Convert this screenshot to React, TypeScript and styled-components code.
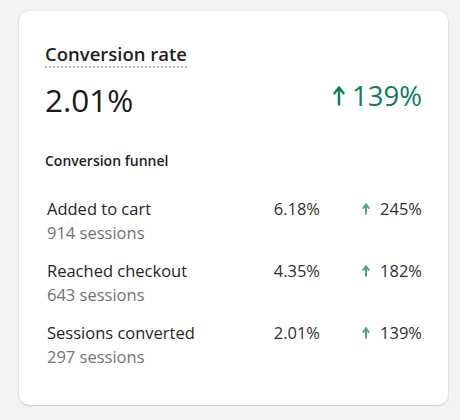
import React from 'react';
import styled, { createGlobalStyle } from 'styled-components';

const GlobalStyle = createGlobalStyle`
  html, body {
    margin: 0;
    padding: 0;
    background: #f3f3f3;
  }
  body {
    font-family: 'Open Sans', 'Noto Sans', sans-serif;
    color: #1f1f1f;
  }
`;

type FunnelStep = {
  label: string;
  sessions: number;
  rate: string;
  change: string;
};

const steps: FunnelStep[] = [
  { label: 'Added to cart', sessions: 914, rate: '6.18%', change: '245%' },
  { label: 'Reached checkout', sessions: 643, rate: '4.35%', change: '182%' },
  { label: 'Sessions converted', sessions: 297, rate: '2.01%', change: '139%' },
];

// up arrow drawn on a w x h box
const UpArrow = ({ w, h, stroke }: { w: number; h: number; stroke: number }) => {
  const mid = w / 2;
  const inset = stroke / 2 + 0.3;
  return (
    <svg width={w} height={h} viewBox={`0 0 ${w} ${h}`} fill="none">
      <path
        d={`M${mid} ${h - inset}V${inset}M${inset} ${mid + inset - 0.3}L${mid} ${inset}L${w - inset} ${mid + inset - 0.3}`}
        stroke="currentColor"
        strokeWidth={stroke}
        strokeLinecap="round"
        strokeLinejoin="round"
      />
    </svg>
  );
};

const App = () => {
  return (
    <Page>
      <GlobalStyle />
      <Card>
        <Title>Conversion rate</Title>
        <Headline>
          <BigValue>2.01%</BigValue>
          <BigChange>
            <UpArrow w={12} h={20} stroke={2.4} />
            <span>139%</span>
          </BigChange>
        </Headline>
        <SectionTitle>Conversion funnel</SectionTitle>
        <Funnel>
          {steps.map((step) => (
            <Step key={step.label}>
              <StepText>
                <StepLabel>{step.label}</StepLabel>
                <Sessions>{step.sessions} sessions</Sessions>
              </StepText>
              <Rate>{step.rate}</Rate>
              <Change>
                <ArrowWrap>
                  <UpArrow w={8} h={12} stroke={2} />
                </ArrowWrap>
                {step.change}
              </Change>
            </Step>
          ))}
        </Funnel>
      </Card>
    </Page>
  );
};

const Page = styled.div`
  padding: 11px 12px 15px 19px;
`;

const Card = styled.div`
  width: 429px;
  height: 394px;
  box-sizing: border-box;
  padding: 31px 26px 0 26px;
  background: #fff;
  border-radius: 10px;
  box-shadow: 0 1px 2px rgba(0, 0, 0, 0.14), 0 0 0 1px rgba(0, 0, 0, 0.03);
`;

const Title = styled.div`
  display: inline-block;
  font-size: 18.5px;
  font-weight: 600;
  line-height: 24px;
  color: #1f1f1f;
  border-bottom: 2px dotted #b9bec6;
`;

const Headline = styled.div`
  display: flex;
  align-items: flex-start;
  justify-content: space-between;
  margin-top: 12px;
`;

const BigValue = styled.div`
  font-size: 31.5px;
  line-height: 40px;
  color: #1a1a1a;
`;

const BigChange = styled.div`
  display: flex;
  align-items: center;
  gap: 7px;
  font-size: 27.5px;
  line-height: 32px;
  color: #0c7d5e;
`;

const SectionTitle = styled.div`
  margin-top: 31px;
  font-size: 14px;
  font-weight: 600;
  line-height: 20px;
  color: #1f1f1f;
`;

const Funnel = styled.div`
  display: flex;
  flex-direction: column;
  gap: 14px;
  margin-top: 26px;
`;

const Step = styled.div`
  display: grid;
  grid-template-columns: 1fr 80px 102px;
  align-items: start;
  padding-left: 2px;
`;

const StepText = styled.div`
  display: flex;
  flex-direction: column;
`;

const StepLabel = styled.div`
  font-size: 16.5px;
  line-height: 24px;
  color: #262626;
`;

const Sessions = styled.div`
  font-size: 16.5px;
  line-height: 24px;
  color: #737373;
`;

const Rate = styled.div`
  font-size: 16.5px;
  line-height: 24px;
  text-align: right;
  color: #303030;
`;

const Change = styled.div`
  display: flex;
  align-items: center;
  justify-content: flex-end;
  gap: 10px;
  font-size: 16.5px;
  line-height: 24px;
  color: #303030;
`;

const ArrowWrap = styled.span`
  display: flex;
  color: #4da585;
`;

export default App;
